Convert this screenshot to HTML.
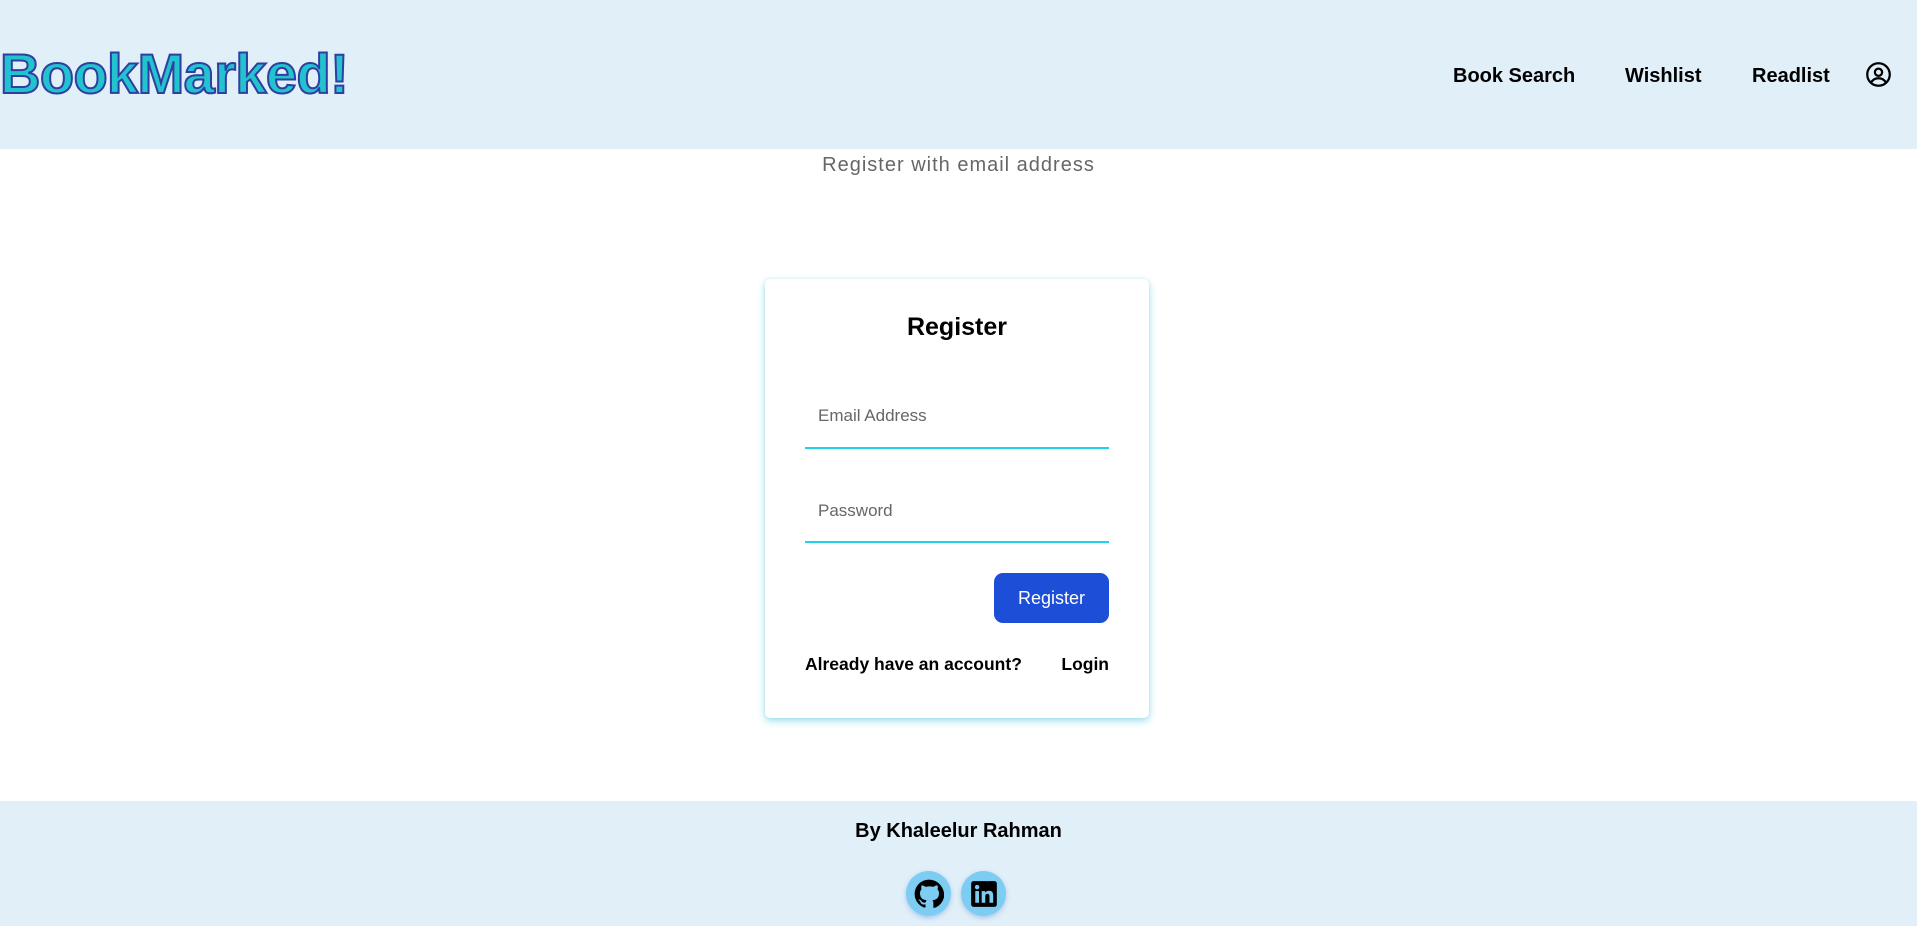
<!DOCTYPE html>
<html><head><meta charset="utf-8"><style>
*{margin:0;padding:0;box-sizing:border-box}
body{width:1917px;height:926px;overflow:hidden;background:#fff;font-family:"Liberation Sans",Arial,sans-serif;position:relative}
.hdr{position:absolute;left:0;top:0;width:1917px;height:149px;background:#e0eff8}
.logo{position:absolute;left:0;top:41px;font-size:56px;font-weight:bold;color:#22c3cf;-webkit-text-stroke:2px #2f3ea0;letter-spacing:-0.6px}
.nav{position:absolute;top:65px;font-size:20px;font-weight:bold;color:#000}
.sub{position:absolute;top:154px;width:1917px;left:0;text-align:center;font-size:20px;color:#666;letter-spacing:1px}
.card{position:absolute;left:765px;top:279px;width:384px;height:439px;background:#fff;border-radius:5px;box-shadow:0 3px 8px rgba(34,190,220,.45),0 0 3px rgba(0,0,0,.08)}
.t{position:absolute;top:34px;width:100%;text-align:center;font-size:25px;font-weight:bold}
.lab{position:absolute;left:53px;font-size:17px;color:#666}
.ul{position:absolute;left:40px;width:304px;height:2px;background:#22d0ea}
.btn{position:absolute;left:229px;top:294px;width:115px;height:50px;background:#1d4ed8;border-radius:9px;color:#fff;font-size:18px;text-align:center;line-height:50px}
.b{position:absolute;top:375px;font-size:17.5px;font-weight:bold}
.ftr{position:absolute;left:0;top:801px;width:1917px;height:125px;background:#e0eff8}
.ic{position:absolute;top:871px;width:45px;height:45px;border-radius:50%;background:#7dcdf3;box-shadow:0 2px 5px rgba(60,120,220,.35);display:flex;align-items:center;justify-content:center}
</style></head><body>
<div class="hdr">
<div class="logo">BookMarked!</div>
<div class="nav" style="left:1453px">Book Search</div>
<div class="nav" style="left:1625px">Wishlist</div>
<div class="nav" style="left:1752px">Readlist</div>
<svg style="position:absolute;left:1865px;top:61px" width="27" height="27" viewBox="0 0 24 24" fill="none" stroke="#000" stroke-width="2"><circle cx="12" cy="12" r="10"/><circle cx="12" cy="10" r="3.2"/><path d="M5.5 19c1.5-2.5 3.8-3.7 6.5-3.7s5 1.2 6.5 3.7"/></svg>
</div>
<div class="sub">Register with email address</div>
<div class="card">
<div class="t">Register</div>
<div class="lab" style="top:127px">Email Address</div>
<div class="ul" style="top:168px"></div>
<div class="lab" style="top:222px">Password</div>
<div class="ul" style="top:262px"></div>
<div class="btn">Register</div>
<div class="b" style="left:40px">Already have an account?</div>
<div class="b" style="right:40px">Login</div>
</div>
<div class="ftr"><div style="position:absolute;top:19px;width:100%;text-align:center;font-size:20px;font-weight:bold">By Khaleelur Rahman</div></div>
<div class="ic" style="left:906px"><svg width="30" height="30" viewBox="0 0 24 24"><path fill="#000" d="M12 .5C5.6.5.5 5.6.5 12c0 5.1 3.3 9.4 7.9 10.9.6.1.8-.3.8-.6v-2c-3.2.7-3.900-1.5-3.9-1.5-.5-1.3-1.3-1.7-1.3-1.7-1-.7.1-.7.1-.7 1.2.1 1.8 1.2 1.8 1.2 1 1.8 2.8 1.3 3.5 1 .1-.8.4-1.300.7-1.6-2.6-.3-5.3-1.3-5.3-5.7 0-1.3.5-2.300 1.2-3.100-.1-.3-.5-1.5.1-3.100 0 0 1-.3 3.3 1.2a11 11 0 0 1 6 0c2.3-1.5 3.3-1.2 3.3-1.2.7 1.6.2 2.8.1 3.1.8.8 1.2 1.9 1.2 3.1 0 4.4-2.7 5.4-5.3 5.7.4.4.8 1.1.8 2.2v3.3c0 .3.2.7.8.6 4.6-1.5 7.9-5.8 7.9-10.9C23.5 5.6 18.4.5 12 .5z"/></svg></div>
<div class="ic" style="left:961px"><svg width="28" height="28" viewBox="0 0 24 24"><rect x="1" y="1" width="22" height="22" rx="2" fill="#000"/><rect x="4.5" y="9.5" width="3.2" height="10" fill="#7dcdf3"/><circle cx="6.1" cy="6.1" r="1.9" fill="#7dcdf3"/><path fill="#7dcdf3" d="M10 9.5h3v1.4c.5-.9 1.7-1.7 3.3-1.700 3 0 3.6 2 3.6 4.5v5.8h-3.2v-5.1c0-1.2-.1-2.6-1.7-2.6s-1.9 1.2-1.9 2.5v5.2H10z"/></svg></div>
</body></html>
